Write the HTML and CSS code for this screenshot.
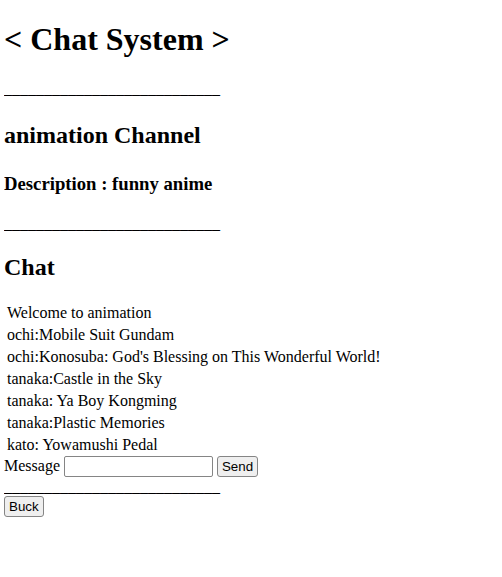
FILE: index.html
```html
<!DOCTYPE html>
<html>
<head>
<meta charset="utf-8">
<title>Chat System</title>
<link rel="stylesheet" href="styles.css">
</head>
<body class="page">
<h1 class="title">&lt; Chat System &gt;</h1>
<p class="rule">___________________________</p>
<h2 class="channel">animation Channel</h2>
<h3 class="desc">Description : funny anime</h3>
<p class="rule">___________________________</p>
<h2 class="chat-head">Chat</h2>
<table class="log">
<tr><td>Welcome to animation</td></tr>
<tr><td>ochi:Mobile Suit Gundam</td></tr>
<tr><td>ochi:Konosuba: God's Blessing on This Wonderful World!</td></tr>
<tr><td>tanaka:Castle in the Sky</td></tr>
<tr><td>tanaka: Ya Boy Kongming</td></tr>
<tr><td>tanaka:Plastic Memories</td></tr>
<tr><td>kato: Yowamushi Pedal</td></tr>
</table>
<form class="send-form">
Message <input class="msg-input" type="text"> <button class="btn" type="button">Send</button>
</form>
<p class="rule rule-tight">___________________________</p>
<button class="btn" type="button">Buck</button>
</body>
</html>
```
FILE: styles.css
```css
.page {
  margin: 5px 4px;
  font-family: "Liberation Serif", "Times New Roman", serif;
  font-size: 16px;
  color: #000;
  background: #fff;
}
.title { font-size: 32px; margin: 16px 0 22px; }
.channel { font-size: 24px; margin: 24px 0; }
.chat-head { font-size: 24px; margin: 21px 0 20px; }
.desc { font-size: 18.72px; margin: 18px 0 20px; }
.rule { margin: 16px 0; }
.rule-tight { margin: 1px 0 0; line-height: 18px; }
.log { border-spacing: 2px; margin-bottom: -1px; }
.log td { padding: 1px; }
.send-form { margin: 0; }
.msg-input {
  width: 143px;
  height: 17px;
  padding: 1px 2px;
  border: 1px solid #858585;
  border-radius: 2px;
  font-size: 13.33px;
  vertical-align: baseline;
}
.btn {
  font-family: "Liberation Sans", Arial, sans-serif;
  font-size: 13.33px;
  padding: 2px 4px;
  border: 1px solid #858585;
  border-radius: 3px;
  background: #efefef;
  color: #000;
}
```
